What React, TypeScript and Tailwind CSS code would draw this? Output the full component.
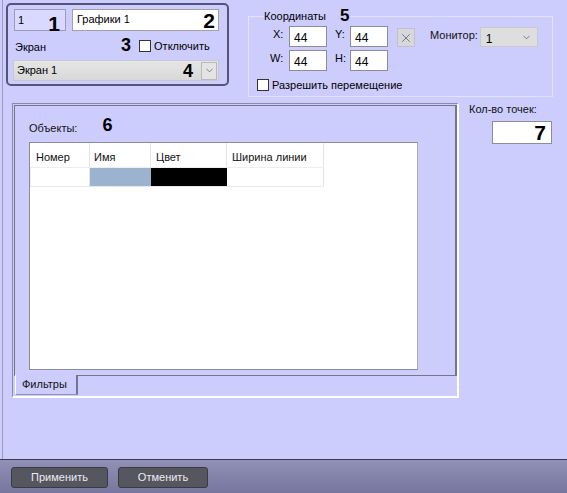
import { ChevronDown, X } from 'lucide-react';

const font = { fontFamily: '"Liberation Sans", Arial, sans-serif' };

const Num = ({ n, size }: { n: string; size: string }) => (
  <span className={`font-bold leading-none text-black ${size}`}>{n}</span>
);

const Field = ({ value, w }: { value: string; w: string }) => (
  <div className={`${w} h-[21px] bg-white border border-[#8c8c9c] flex items-center pl-[4px] pt-[2px] text-[12px]`}>
    {value}
  </div>
);

const Check = () => <span className="inline-block w-[12px] h-[12px] bg-white border border-[#333]" />;

const App = () => {
  return (
    <div className="w-[567px] h-[493px] bg-[#cdcdfd] flex flex-col text-[11px] text-black overflow-hidden" style={font}>
      <div className="flex-1 ml-[2px] border-l border-[#9c9cbc] flex flex-col">
        {/* top row */}
        <div className="flex items-start h-[97px]">
          <div className="ml-[3px] mt-[3px] w-[223px] h-[83px] border-2 border-[#55557a] rounded-[5px] px-[6px] pt-[4px]">
            <div className="flex gap-[6px]">
              <div className="w-[52px] h-[22px] bg-[#d9d9ff] border border-[#9a9ac4] flex items-start justify-between pl-[3px] pr-[5px] pt-[2px]">
                <span className="text-[11px]">1</span>
                <Num n="1" size="text-[21px] mt-[1px]" />
              </div>
              <div className="w-[147px] h-[22px] bg-white border border-[#a0a0a8] flex items-center justify-between pl-[4px] pr-[3px]">
                <span className="text-[11px] -mt-[1px]">Графики 1</span>
                <Num n="2" size="text-[21px]" />
              </div>
            </div>
            <div className="flex items-center h-[29px] pt-[1px]">
              <span className="ml-[1px] mt-[3px]">Экран</span>
              <span className="ml-[75px]"><Num n="3" size="text-[18px]" /></span>
              <span className="ml-[8px] flex items-center"><Check /></span>
              <span className="ml-[3px] mt-[1px]">Отключить</span>
            </div>
            <div className="w-[206px] h-[21px] bg-gradient-to-b from-[#e6e6e6] to-[#d8d8d8] border border-[#c8c8d0] flex items-center -ml-[1px]">
              <span className="pl-[3px] flex-1">Экран 1</span>
              <Num n="4" size="text-[18px] mr-[8px]" />
              <span className="w-[16px] h-[18px] mr-[1px] bg-[#e4e4e4] border border-[#b8b8c0] flex items-center justify-center">
                <ChevronDown size={11} strokeWidth={1.5} className="text-[#555]" />
              </span>
            </div>
          </div>

          <fieldset className="ml-[19px] mt-[9px] w-[305px] h-[88px] border border-[#e2e2fb] pl-[8px] pr-[4px]">
            <legend className="ml-[7px] flex items-center h-[14px]">
              <span className="text-[11px]">Координаты</span>
              <span className="ml-[14px]"><Num n="5" size="text-[17px]" /></span>
            </legend>
            <div className="flex items-center mt-[3px] h-[21px]">
              <span className="ml-[16px] w-[16px] -mt-[4px]">X:</span>
              <Field value="44" w="w-[38px]" />
              <span className="ml-[8px] w-[15px] -mt-[4px]">Y:</span>
              <Field value="44" w="w-[38px]" />
              <span className="ml-[9px] w-[18px] h-[19px] bg-[#d8d8dc] border border-[#c0c0c8] flex items-center justify-center mt-[2px]">
                <X size={14} strokeWidth={1.1} className="text-[#444]" />
              </span>
              <span className="ml-[15px] -mt-[3px] text-[#111]">Монитор:</span>
              <span className="ml-[2px] w-[58px] h-[20px] bg-[#dedede] border border-[#c8c8d0] flex items-center justify-between pl-[5px] pr-[5px] mt-[1px]">
                <span className="text-[12px] pt-[3px]">1</span>
                <ChevronDown size={11} strokeWidth={1.5} className="text-[#555]" />
              </span>
            </div>
            <div className="flex items-center mt-[3px] h-[21px]">
              <span className="ml-[13px] w-[19px] -mt-[4px]">W:</span>
              <Field value="44" w="w-[38px]" />
              <span className="ml-[8px] w-[15px] -mt-[4px]">H:</span>
              <Field value="44" w="w-[38px]" />
            </div>
            <div className="flex items-center mt-[6px]">
              <Check />
              <span className="ml-[3px]">Разрешить перемещение</span>
            </div>
          </fieldset>
        </div>

        {/* middle row */}
        <div className="flex items-start mt-[6px]">
          <div className="ml-[9px] w-[447px] h-[295px] border-t border-l border-[#8a8aa4] border-b-2 border-r-2 border-b-white border-r-white pl-[1px] pt-[1px] flex flex-col">
            <div className="w-[443px] h-[271px] border border-[#74748a] border-r-2 pl-[14px] flex flex-col">
              <div className="flex items-center h-[36px] pt-[4px]">
                <span className="text-[11px] text-[#111] mt-[4px]">Объекты:</span>
                <span className="ml-[25px]"><Num n="6" size="text-[18px]" /></span>
              </div>
              <div className="w-[389px] h-[228px] bg-white border border-[#8a8a98] border-r-[#aaaab4]">
                <div className="flex w-[294px] h-[25px] border-b border-[#eeeeee] text-[11px] text-[#111]">
                  <div className="w-[60px] pl-[6px] pt-[6px] border-r border-[#e4e4e4]">Номер</div>
                  <div className="w-[61px] pl-[4px] pt-[6px] border-r border-[#e4e4e4]">Имя</div>
                  <div className="w-[76px] pl-[5px] pt-[6px] border-r border-[#e4e4e4]">Цвет</div>
                  <div className="w-[97px] pl-[5px] pt-[6px] border-r border-[#e4e4e4]">Ширина линии</div>
                </div>
                <div className="flex w-[294px] h-[19px] border-b border-[#e8e8e8]">
                  <div className="w-[60px] border-l border-[#eeeeee] border-r border-r-[#e4e4e4]" />
                  <div className="w-[61px] bg-[#9bb3cf]" />
                  <div className="w-[76px] bg-black" />
                  <div className="w-[97px] border-r border-[#e4e4e4]" />
                </div>
              </div>
            </div>
            <div className="flex">
              <div className="ml-[1px] w-[63px] h-[20px] border-l border-l-white border-r-2 border-r-[#74748a] border-b border-b-[#9090a8] rounded-bl-[2px] flex items-center pl-[6px] -mt-[1px] bg-[#cdcdfd]">
                <span className="text-[11px] text-[#111]">Фильтры</span>
              </div>
            </div>
          </div>

          <div className="ml-[10px] -mt-[2px] flex flex-col">
            <span className="text-[11px] text-[#111]">Кол-во точек:</span>
            <div className="ml-[23px] mt-[3px] w-[60px] h-[23px] bg-white border border-[#8c8c9c] flex items-center justify-end pr-[5px]">
              <Num n="7" size="text-[21px]" />
            </div>
          </div>
        </div>
      </div>

      {/* bottom bar */}
      <div className="h-[34px] border-t border-[#3c3c4c] bg-gradient-to-b from-[#9290b6] to-[#77769e] flex items-center gap-[10px] pl-[11px] pt-[1px]">
        <button className="w-[97px] h-[21px] bg-[#56565f] border border-[#3a3a44] rounded-[3px] text-[11px] text-[#ececf4]" style={font}>
          Применить
        </button>
        <button className="w-[90px] h-[21px] bg-[#56565f] border border-[#3a3a44] rounded-[3px] text-[11px] text-[#ececf4]" style={font}>
          Отменить
        </button>
      </div>
    </div>
  );
};

export default App;
